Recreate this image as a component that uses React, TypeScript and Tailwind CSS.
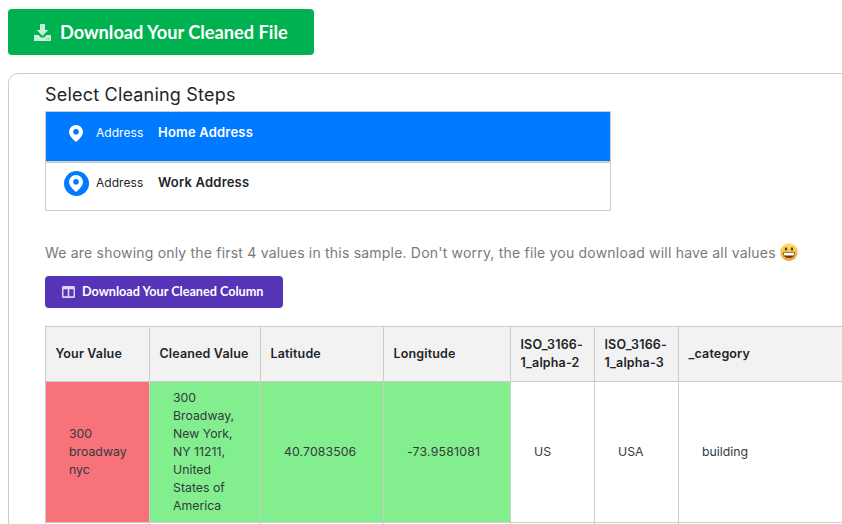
import { useState } from "react";

const sans = { fontFamily: "Inter, sans-serif" };

function DownloadIcon() {
  return (
    <svg width="19" height="19" viewBox="0 0 19 19" className="opacity-80">
      <path fill="currentColor" d="M7 1h5v6h3.2L9.5 13 3.8 7H7z" />
      <path fill="currentColor" fillRule="evenodd" d="M1 12h4.500l2.400 2.400h3.200L13.500 12H18v6H1zM13 15.400h1.200v.9H13zm2 0h1.200v.9H15z" />
    </svg>
  );
}

function TableIcon() {
  return (
    <svg width="13" height="12" viewBox="0 0 13 12" className="opacity-80">
      <path fill="currentColor" fillRule="evenodd" d="M1.500 0h10A1.500 1.500 0 0 1 13 1.500v9a1.500 1.500 0 0 1-1.500 1.500h-10A1.500 1.500 0 0 1 0 10.500v-9A1.500 1.500 0 0 1 1.500 0zM1.500 3.200v7h4.200v-7zm5.800 0v7h4.200v-7z" />
    </svg>
  );
}

function PinIcon({ color, hole }: { color: string; hole: string }) {
  return (
    <svg width="14" height="17" viewBox="0 0 14 17">
      <path fill={color} d="M7 0a7 7 0 0 1 7 7c0 3.600-3.800 7.400-7 10C3.800 14.400 0 10.600 0 7a7 7 0 0 1 7-7z" />
      <circle cx="7" cy="6.800" r="2.800" fill={hole} />
    </svg>
  );
}

function Grin() {
  return (
    <svg width="18" height="18" viewBox="0 0 18 18" className="inline-block align-[-3px]">
      <defs>
        <linearGradient id="face" x1="0" y1="0" x2="0" y2="1">
          <stop offset="0" stopColor="#fde36a" />
          <stop offset="1" stopColor="#f29a2e" />
        </linearGradient>
      </defs>
      <circle cx="9" cy="9" r="8.700" fill="url(#face)" />
      <ellipse cx="6" cy="6" rx="1.200" ry="1.700" fill="#5a3a12" />
      <ellipse cx="12" cy="6" rx="1.200" ry="1.700" fill="#5a3a12" />
      <path d="M3 9.500h12c0 3.400-2.600 5.500-6 5.500s-6-2.100-6-5.500z" fill="#5a3a12" />
      <path d="M3.800 10h10.400c0 1.100-.2 1.800-.6 2.500H4.400c-.4-.7-.6-1.400-.6-2.500z" fill="#fff" />
    </svg>
  );
}

const addresses = ["Home Address", "Work Address"];

const headers = ["Your Value", "Cleaned Value", "Latitude", "Longitude", "ISO_3166-1_alpha-2", "ISO_3166-1_alpha-3", "_category"];

export default function App() {
  const [selected, setSelected] = useState(0);

  return (
    <div className="w-[842px] h-[524px] overflow-hidden bg-white text-[#212529]" style={sans}>
      <div className="pl-2 pt-[9px]">
        <button
          className="flex items-center h-[46px] w-[306px] pl-[25px] pt-[1px] gap-[8px] rounded-[4px] bg-[#00b14f] text-white text-[18.200px] font-bold"
          style={{ fontFamily: "Lato, sans-serif" }}
        >
          <DownloadIcon />
          Download Your Cleaned File
        </button>

        <div className="mt-[18px] w-[1000px] pl-9 pt-[9px] pb-8 border border-[#cccccc] rounded-[10px]">
          <h2 className="text-[18px] leading-[26px] tracking-[0.2px] font-normal -mt-[1px] text-[#212529]">Select Cleaning Steps</h2>

          <div className="mt-[3px] w-[566px] border border-[#cccccc]">
            {addresses.map((name, i) => {
              const active = selected === i;
              return (
                <div
                  key={name}
                  onClick={() => setSelected(i)}
                  className={`flex items-center h-[49px] pb-[7px] ${i > 0 ? "border-t-2 border-[#cccccc]" : ""} ${active ? "bg-[#007bff] text-white" : "bg-white text-[#212529]"}`}
                >
                  <div className="w-[50px] pl-[10px] flex justify-center">
                    {active ? (
                      <PinIcon color="#ffffff" hole="#007bff" />
                    ) : (
                      <span className="flex items-center justify-center w-[25px] h-[25px] rounded-full bg-[#007bff]">
                        <PinIcon color="#ffffff" hole="#007bff" />
                      </span>
                    )}
                  </div>
                  <span className="text-[12px] tracking-[0.05px] w-[62px]">Address</span>
                  <span className="text-[13px] tracking-[0.2px] font-semibold">{name}</span>
                </div>
              );
            })}
          </div>

          <p className="mt-[32px] text-[14px] leading-[20px] tracking-[0.2px] text-[#7a7a7a] whitespace-nowrap">
            We are showing only the first 4 values in this sample. Don't worry, the file you download will have all values <Grin />
          </p>

          <button
            className="mt-[13px] flex items-center h-[32px] w-[238px] pl-[17px] gap-[7px] rounded-[4px] bg-[#5534b8] text-white text-[12.650px] font-bold"
            style={{ fontFamily: "Lato, sans-serif" }}
          >
            <TableIcon />
            Download Your Cleaned Column
          </button>

          <table className="mt-[18px] table-fixed border-collapse text-[12.300px] leading-[18px] w-[797px]">
            <colgroup>
              <col className="w-[104px]" />
              <col className="w-[111px]" />
              <col className="w-[123px]" />
              <col className="w-[127px]" />
              <col className="w-[84px]" />
              <col className="w-[84px]" />
              <col className="w-[164px]" />
            </colgroup>
            <thead>
              <tr className="h-[55px] bg-[#f2f2f2]">
                {headers.map((h) => (
                  <th key={h} className="border border-[#cccccc] px-[9.500px] text-left text-[12.500px] tracking-[0.15px] font-semibold break-words">
                    {h}
                  </th>
                ))}
              </tr>
            </thead>
            <tbody>
              <tr className="h-[141px] text-[#343a40]">
                <td className="border border-[#cccccc] bg-[#f8727a] pl-[23px] pr-[16px]">300 broadway nyc</td>
                <td className="border border-[#cccccc] bg-[#82ee8d] pl-[23px] pr-[16px]">300 Broadway, New York, NY 11211, United States of America</td>
                <td className="border border-[#cccccc] bg-[#82ee8d] pl-[23px] tracking-[0.1px]">40.7083506</td>
                <td className="border border-[#cccccc] bg-[#82ee8d] pl-[23px] tracking-[0.2px]">-73.9581081</td>
                <td className="border border-[#cccccc] pl-[23px]">US</td>
                <td className="border border-[#cccccc] pl-[23px]">USA</td>
                <td className="border border-[#cccccc] pl-[23px]">building</td>
              </tr>
              <tr className="h-[40px]">
                {headers.map((h) => (
                  <td key={h} className="border border-[#cccccc]"></td>
                ))}
              </tr>
            </tbody>
          </table>
        </div>
      </div>
    </div>
  );
}
